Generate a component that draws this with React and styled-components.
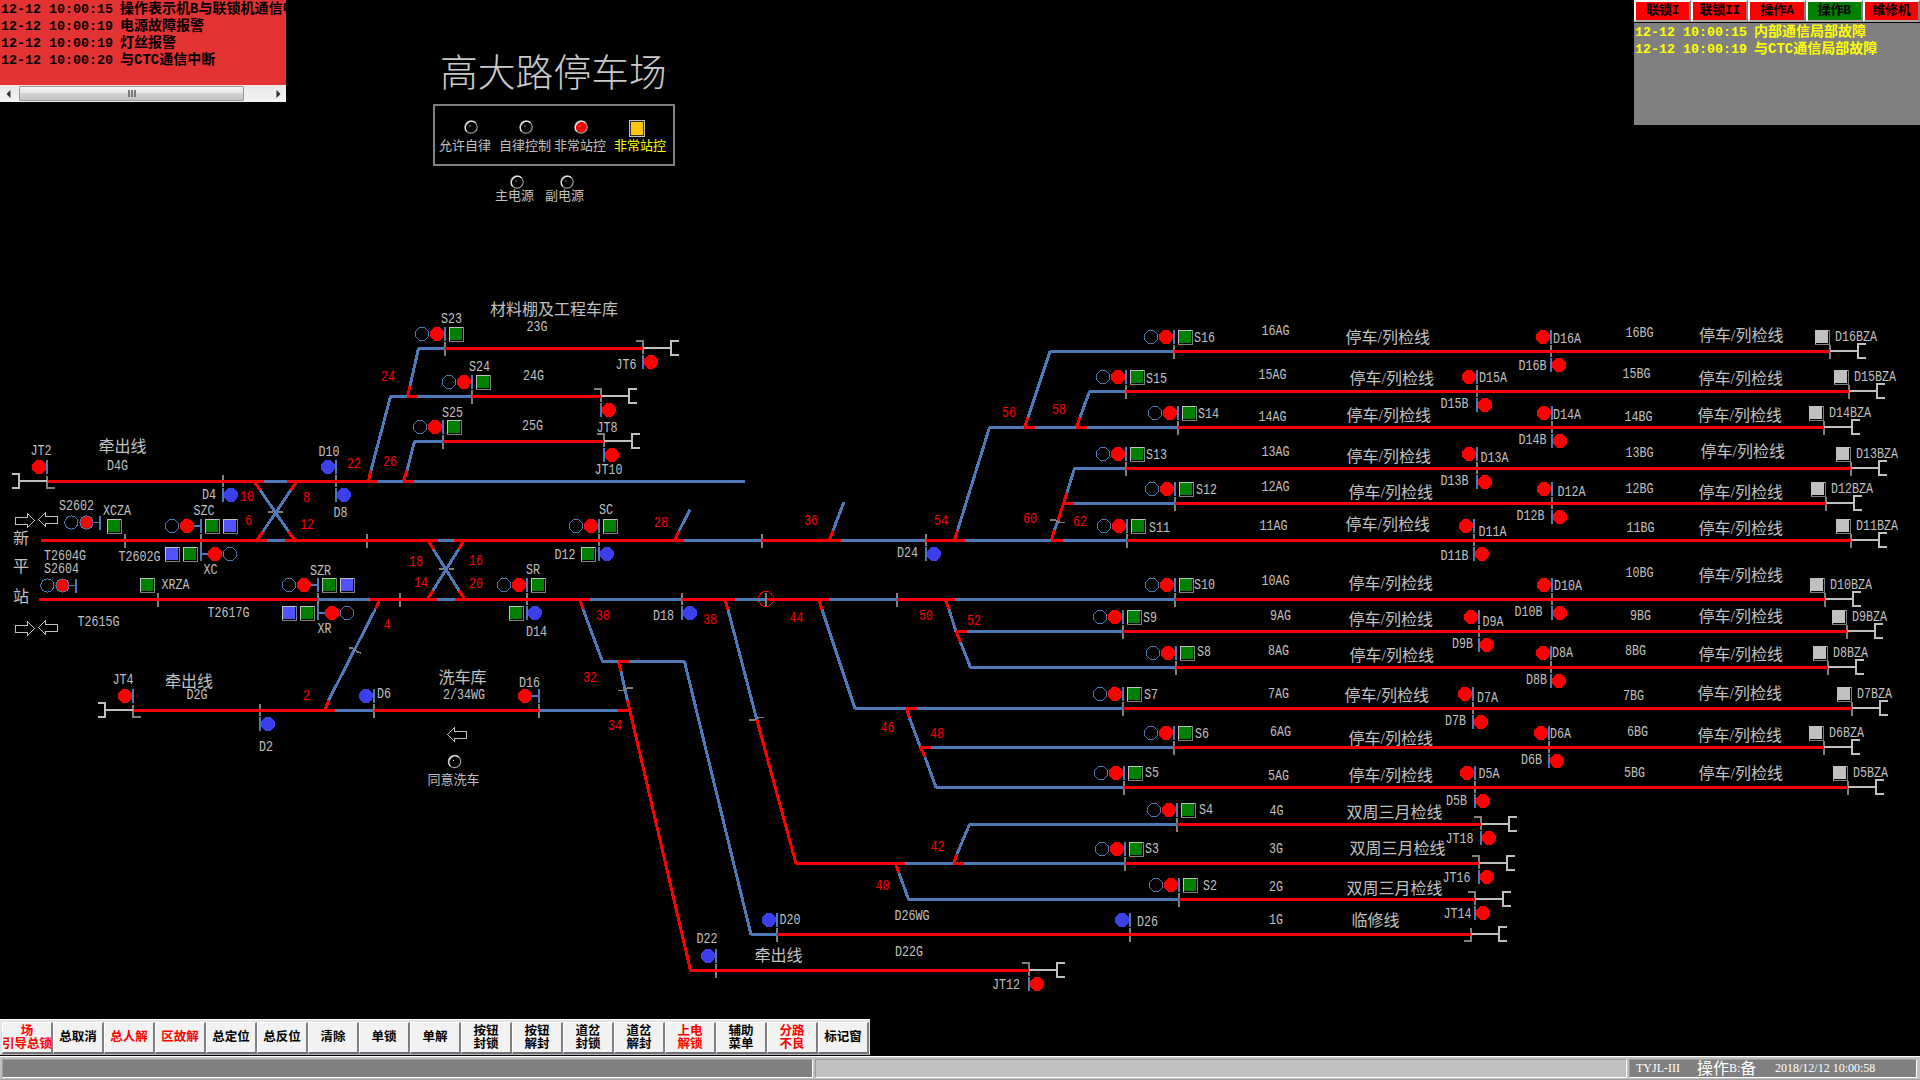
import React from "react";
import styled, { createGlobalStyle } from "styled-components";

const C = {
  red: "#ff0000",
  track: "#5078b8",
  blue: "#3c40ec",
  lilac: "#5252ff",
  green: "#008000",
  light: "#c0c0c0",
  gray: "#808080",
};

const CJK = '"Noto Sans CJK SC"';
const MONO = `"Liberation Mono", ${CJK}, monospace`;
const SERIF = `"Liberation Serif", ${CJK}, serif`;

const GlobalStyle = createGlobalStyle`
  * { box-sizing: border-box; }
  html, body { margin: 0; padding: 0; background: #000; overflow: hidden; }
`;

const Screen = styled.div`
  width: 1920px;
  height: 1080px;
  background: #000;
  display: flex;
  flex-direction: column;
  overflow: hidden;
`;

const Header = styled.header`
  display: flex;
  align-items: flex-start;
  height: 290px;
`;

/* ---------- alarm window ---------- */

const AlarmWindow = styled.section`
  width: 286px;
  height: 102px;
  display: flex;
  flex-direction: column;
`;

const MessageList = styled.div`
  flex: 1;
  overflow: hidden;
  background: ${(p) => p.$bg};
  color: ${(p) => p.$fg};
  padding: ${(p) => p.$pad};
`;

const MessageRow = styled.div`
  display: flex;
  gap: 7px;
  height: 17px;
  line-height: 17px;
  white-space: nowrap;
  font-family: ${MONO};
  font-weight: 700;
  font-size: 14px;
`;

const Stamp = styled.span`
  flex: none;
  width: 112px;
  font-size: 13.33px;
`;

const ScrollBar = styled.div`
  display: flex;
  align-items: center;
  height: 17px;
  background: linear-gradient(#e8e8e8, #f4f4f4);
`;

const ScrollButton = styled.div`
  width: 16px;
  display: flex;
  justify-content: center;
`;

const ScrollThumb = styled.div`
  width: 225px;
  height: 15px;
  margin-left: 3px;
  border: 1px solid #979797;
  border-radius: 1px;
  background: linear-gradient(#f4f4f4, #e6e6e6 45%, #d2d2d4 50%, #c4c4c8);
  display: flex;
  align-items: center;
  justify-content: center;
  gap: 1px;
`;

const Grip = styled.span`
  width: 2px;
  height: 7px;
  background: #7c7c7c;
`;

const ScrollSpace = styled.div`
  flex: 1;
`;

/* ---------- station header ---------- */

const Station = styled.section`
  margin-left: 147px;
  width: 242px;
  padding-top: 50px;
`;

const Title = styled.h1`
  margin: 0 0 14px;
  padding-left: 7px;
  height: 40px;
  font: 300 37.8px/40px ${CJK}, sans-serif;
  color: #cacaca;
  white-space: nowrap;
`;

const ModeBox = styled.div`
  width: 242px;
  height: 62px;
  border: 2px solid ${C.gray};
  padding: 14px 0 0 4px;
  display: flex;
`;

const PowerRow = styled.div`
  display: flex;
  padding: 9px 0 0 62px;
`;

const Indicator = styled.div`
  flex: none;
  width: ${(p) => p.$w}px;
  margin-left: ${(p) => p.$gap || 0}px;
  display: flex;
  flex-direction: column;
  align-items: center;
  font: 400 13px/14px ${CJK}, sans-serif;
  color: ${(p) => p.$color || C.light};
  white-space: nowrap;
`;

const LampSlot = styled.div`
  height: ${(p) => p.$h}px;
  padding-left: ${(p) => Math.max(0, p.$shift * 2)}px;
  padding-right: ${(p) => Math.max(0, -p.$shift * 2)}px;
`;

const SquareLamp = styled.div`
  width: 16px;
  height: 17px;
  border: 1px solid ${C.light};
  background: #ffc60a;
  box-shadow: inset 0 0 0 1px #303030;
`;

/* ---------- link status window ---------- */

const LinkWindow = styled.section`
  margin-left: auto;
  width: 286px;
  height: 125px;
  display: flex;
  flex-direction: column;
`;

const LinkButtons = styled.div`
  display: flex;
  height: 23px;
  background: #c0c0c0;
  border-bottom: 1px solid #000;
`;

const LinkButton = styled.button`
  flex: 1;
  padding: 0;
  border: 2px solid;
  border-color: #ffffff #808080 #a8a8a8 #ffffff;
  background: ${(p) => (p.$ok ? C.green : C.red)};
  color: #000;
  font: 700 13px/16px ${MONO};
  letter-spacing: -0.3px;
`;

/* ---------- bottom ---------- */

const Toolbar = styled.nav`
  display: flex;
  width: 870px;
  height: 36px;
  padding: 2px 1px 1px 2px;
  background: #e4e4e4;
  border-top: 1px solid #fff;
  border-bottom: 1px solid #b4b4bc;
`;

const ToolButton = styled.button`
  flex: 1;
  min-width: 0;
  height: 32px;
  padding: 0 0 4px;
  border: solid;
  border-width: 1px 2px 2px 1px;
  border-color: #ffffff #808084 #707074 #ffffff;
  background: #f2f2f2;
  color: ${(p) => (p.$red ? C.red : "#000")};
  font: 700 12.5px/13px ${CJK}, sans-serif;
  display: flex;
  flex-direction: column;
  align-items: center;
  justify-content: center;
  white-space: nowrap;
  overflow: hidden;
`;

const StatusBar = styled.footer`
  display: flex;
  gap: 2px;
  height: 24px;
  margin-top: 1px;
  padding: 2px 2px 1px;
  background: #c0c0c0;
  border-top: 1px solid #fff;
  border-bottom: 1px solid #a0a0a0;
`;

const StatusCell = styled.div`
  width: ${(p) => p.$w}px;
  height: 19px;
  border: 1px solid;
  border-color: #9a9a9a #fff #fff #9a9a9a;
  background: ${(p) => (p.$dark ? "#808080" : "#c0c0c0")};
  color: #ffffff;
  display: flex;
  align-items: center;
  padding-left: 6px;
  font: 12px/17px ${SERIF};
  white-space: nowrap;
`;

const StatusText = styled.span`
  width: ${(p) => p.$w}px;
  display: flex;
  align-items: center;
`;

const Wide = styled.span`
  font-size: 16px;
`;

/* ---------- diagram ---------- */

const Diagram = styled.svg`
  display: block;
  flex: none;
  width: 1920px;
  height: 729px;
`;

const Code = styled.text`
  font-family: ${MONO};
  font-size: 14px;
  fill: ${(p) => p.$fill};
`;

const Name = styled.text`
  font-family: ${SERIF};
  font-size: ${(p) => p.$size}px;
  fill: ${C.light};
`;

// [points, colour]; r = occupied or switch stub, b = free
const TRACKS = [];
const row = (y, ...stops) => {
  for (let i = 0; i + 2 < stops.length; i += 2) {
    TRACKS.push([[stops[i], y, stops[i + 2], y], stops[i + 1]]);
  }
};
const path = (...v) => {
  for (let i = 0; i + 3 < v.length; i += 3) {
    TRACKS.push([[v[i], v[i + 1], v[i + 3], v[i + 4]], v[i + 2]]);
  }
};

path(368.5, 481, "r", 371, 470.5, "b", 390.5, 396.5);
path(407.5, 396, "r", 410, 386, "b", 418.5, 348.5);
path(403.5, 481, "r", 407, 470.5, "b", 414.5, 441.5);
path(254.5, 482, "r", 260.5, 490.5, "b", 288.5, 531.5, "r", 294.5, 540);
path(296.5, 482, "r", 290.5, 490.5, "b", 263, 531.5, "r", 257, 540);
path(428.5, 541, "r", 433.5, 549.5, "b", 459, 590.5, "r", 464.5, 599);
path(463.5, 541, "r", 458.5, 549.5, "b", 433, 590.5, "r", 427.5, 599);
path(674.5, 540, "r", 679, 531, "b", 690, 509.5);
path(829.5, 540, "r", 833, 530.5, "b", 844, 502);
path(954.5, 540, "r", 957.5, 530.5, "b", 989.5, 427.5);
path(1024.5, 427, "r", 1028, 417.5, "b", 1050, 351.5);
path(1076.5, 427, "r", 1080, 417.5, "b", 1089.5, 391.5);
path(1051.5, 540, "r", 1054.5, 530, "b", 1057.5, 522, "r", 1067, 492.5, "b", 1074.5, 468.5);
path(945.5, 600, "r", 949, 609.5, "b", 956, 631.5, "r", 960.5, 642, "b", 970.5, 667.5);
path(819, 600, "r", 822, 609.5, "b", 855, 708.5);
path(906.5, 708.5, "r", 909.5, 718, "b", 920.5, 747.5, "r", 925, 757, "b", 936, 787.5);
path(725, 600, "r", 728, 609.5, "b", 756.5, 718.5, "r", 796, 863.5);
path(953.5, 863.5, "r", 957, 854, "b", 969.5, 824.5);
path(895.5, 863.5, "r", 899, 873, "b", 908.5, 899.5);
path(580, 600, "r", 583, 609, "b", 602.5, 661.5);
path(684.5, 661.5, "b", 751, 934.5);
path(618.5, 662, "r", 621, 671.5, "b", 627.5, 700.5, "r", 690.5, 970.5);
path(379.5, 600, "r", 375.5, 609, "b", 328.5, 700.5, "r", 325, 710);

row(481.5, 48, "r", 264, "b", 287, "r", 378, "b", 403, "r", 414, "b", 745);
row(540.5, 41, "r", 267, "b", 285, "r", 438, "b", 453.5, "r", 684, "b", 762, "r", 841, "b", 926, "r", 965, "b", 1051, "r", 1063, "b", 1127, "r", 1851);
row(599.5, 39, "r", 318, "b", 370, "r", 437, "b", 455, "r", 590, "b", 682, "r", 735, "b", 766, "r", 829, "b", 897, "r", 955, "b", 1175, "r", 1825);
row(710.5, 134, "r", 335, "b", 374, "r", 539, "b", 618, "r", 629);
row(348.5, 418, "b", 445, "r", 643);
row(396.5, 390, "b", 407, "r", 418, "b", 472, "r", 601);
row(441.5, 414, "b", 443, "r", 604);
row(351.5, 1050, "b", 1174, "r", 1830);
row(391.5, 1089, "b", 1126, "r", 1849);
row(427.5, 989, "b", 1024, "r", 1035, "b", 1076, "r", 1087, "b", 1178, "r", 1824);
row(468.5, 1074, "b", 1126, "r", 1851);
row(503.5, 1063, "r", 1074, "b", 1175, "r", 1826);
row(631.5, 956, "r", 967, "b", 1123, "r", 1847);
row(667.5, 970, "b", 1176, "r", 1828);
row(708.5, 855, "b", 906, "r", 917, "b", 1123, "r", 1852);
row(747.5, 920, "r", 931, "b", 1174, "r", 1824);
row(787.5, 936, "b", 1124, "r", 1848);
row(824.5, 969, "b", 1177, "r", 1481);
row(863.5, 796, "r", 905, "b", 953, "r", 964, "b", 1125, "r", 1479);
row(899.5, 908, "b", 1179, "r", 1475);
row(934.5, 751, "b", 777, "r", 1471);
row(970.5, 690, "r", 1029);
row(661.5, 602, "b", 618, "r", 629, "b", 685);

// exit signals: post x, track y
const HOME = [
  [445, 348.5], [472, 396.5], [443, 441.5], [599, 540.5], [527, 599.5],
  [1174, 351.5], [1126, 391.5], [1178, 427.5], [1126, 468.5], [1175, 503.5], [1127, 540.5],
  [1175, 599.5], [1123, 631.5], [1176, 667.5], [1123, 708.5], [1174, 747.5], [1124, 787.5],
  [1177, 824.5], [1125, 863.5], [1179, 899.5],
];

// paired shunting signals inside the stabling tracks
const PAIRS = [
  [1551, 351.5], [1477, 391.5], [1552, 427.5], [1477, 468.5], [1552, 503.5], [1474, 540.5],
  [1552, 599.5], [1479, 631.5], [1551, 667.5], [1473, 708.5], [1549, 747.5], [1475, 787.5],
];

const UP = [[336, 481.5, C.blue], [374, 710.5, C.blue], [777, 934.5, C.blue], [716, 970.5, C.blue], [1130, 934.5, C.blue]];
const DOWN = [
  [223, 481.5, C.blue], [336, 481.5, C.blue], [260, 710.5, C.blue], [599, 540.5, C.blue],
  [527, 599.5, C.blue], [682, 599.5, C.blue], [926, 540.5, C.blue],
];

const JOINTS = [[125, 540.5], [201, 540.5], [367, 540.5], [158, 599.5], [318, 599.5], [400, 599.5], [762, 540.5], [766, 599.5], [897, 599.5], [539, 710.5]];

const JT = [[643, 348.5], [601, 396.5], [604, 441.5], [1481, 824.5], [1479, 863.5], [1475, 899.5], [1029, 970.5]];

// stabling track ends: post x, track y, number
const ENDS = [
  [1830, 351.5, 16], [1849, 391.5, 15], [1824, 427.5, 14], [1851, 468.5, 13], [1826, 503.5, 12], [1851, 540.5, 11],
  [1825, 599.5, 10], [1847, 631.5, 9], [1828, 667.5, 8], [1852, 708.5, 7], [1824, 747.5, 6], [1848, 787.5, 5],
];

const CODES = [
  [31, 455, "JT2"], [107.5, 470, "D4G"], [319, 456, "D10"], [202.5, 498.5, "D4"], [334, 517, "D8"], [59.5, 510, "S2602"],
  [103.5, 515, "XCZA"], [194, 515, "SZC"], [44.5, 559.5, "T2604G"], [44.5, 573, "S2604"], [119, 561, "T2602G"],
  [204, 574, "XC"], [162, 589, "XRZA"], [310.5, 574.5, "SZR"], [208, 617, "T2617G"], [78, 626, "T2615G"], [318, 633, "XR"],
  [113, 684, "JT4"], [187, 699, "D2G"], [377.5, 698, "D6"], [259.5, 751, "D2"],
  [527, 330.5, "23G"], [441.5, 322.5, "S23"], [469.5, 370.5, "S24"], [523.5, 379.5, "24G"], [442.5, 416.5, "S25"],
  [522.5, 429.5, "25G"], [616, 368.5, "JT6"], [597, 431.5, "JT8"], [595, 473.5, "JT10"], [599.5, 513.5, "SC"],
  [555, 558.5, "D12"], [526.5, 573.5, "SR"], [526.5, 635.5, "D14"], [653.5, 619.5, "D18"], [443.5, 698.5, "2/34WG"],
  [519.5, 686.5, "D16"], [897.5, 556.5, "D24"], [780, 923.5, "D20"], [895, 919.5, "D26WG"], [697, 942.5, "D22"],
  [895.5, 955.5, "D22G"], [992.5, 988.5, "JT12"], [1446, 842.5, "JT18"], [1443, 881.5, "JT16"], [1444, 917.5, "JT14"],
  [1194.5, 342, "S16"], [1146.5, 382.5, "S15"], [1198.5, 417.5, "S14"], [1146.5, 458.5, "S13"], [1196.5, 493.5, "S12"],
  [1149.5, 531.5, "S11"], [1194.5, 589, "S10"], [1143.5, 622, "S9"], [1197.5, 655.5, "S8"], [1144.5, 698.5, "S7"],
  [1195.5, 737.5, "S6"], [1145.5, 776.5, "S5"], [1199.5, 813.5, "S4"], [1145.5, 852.5, "S3"], [1203.5, 889.5, "S2"],
  [1137.5, 925.5, "D26"],
  [1262, 334.5, "16AG"], [1259, 378.5, "15AG"], [1259, 420.5, "14AG"], [1262, 455.5, "13AG"], [1262, 490.5, "12AG"],
  [1260, 529.5, "11AG"], [1262, 584.5, "10AG"], [1270.5, 619.5, "9AG"], [1268.5, 654.5, "8AG"], [1268.5, 697.5, "7AG"],
  [1270.5, 735.5, "6AG"], [1268.5, 779.5, "5AG"], [1270, 814.5, "4G"], [1269.5, 852.5, "3G"], [1269.5, 890.5, "2G"],
  [1269.5, 923.5, "1G"],
  [1553.5, 342.5, "D16A"], [1479.5, 381.5, "D15A"], [1553.5, 418.5, "D14A"], [1481, 461.5, "D13A"], [1558, 495.5, "D12A"],
  [1479, 535.5, "D11A"], [1554.5, 589.5, "D10A"], [1483, 625.5, "D9A"], [1552.5, 656.5, "D8A"], [1477.5, 701.5, "D7A"],
  [1550.5, 737.5, "D6A"], [1479, 777.5, "D5A"],
  [1519, 370, "D16B"], [1441, 407.5, "D15B"], [1519, 443.5, "D14B"], [1441, 484.5, "D13B"], [1517, 519.5, "D12B"],
  [1441, 559.5, "D11B"], [1515, 615.5, "D10B"], [1452.5, 647.5, "D9B"], [1526.5, 683.5, "D8B"], [1445.5, 724.5, "D7B"],
  [1521.5, 763.5, "D6B"], [1446.5, 804.5, "D5B"],
  [1626, 336.5, "16BG"], [1623, 378, "15BG"], [1625, 420.5, "14BG"], [1626, 456.5, "13BG"], [1626, 492.5, "12BG"],
  [1627, 531.5, "11BG"], [1626, 576.5, "10BG"], [1630.5, 619.5, "9BG"], [1625.5, 654.5, "8BG"], [1623.5, 699.5, "7BG"],
  [1627.5, 735.5, "6BG"], [1624.5, 776.5, "5BG"],
];

const POINTS = [
  [347.5, 468, "22"], [383.5, 466, "26"], [240.5, 501, "10"], [303.5, 502, "8"], [245.5, 525, "6"], [300.5, 529, "12"],
  [384, 629, "4"], [303.5, 700, "2"], [381.5, 381, "24"], [654.5, 526.5, "28"], [409.5, 565.5, "18"], [469.5, 564.5, "16"],
  [414.5, 586.5, "14"], [469.5, 587.5, "20"], [596.5, 619.5, "30"], [703.5, 624, "38"], [583.5, 681.5, "32"],
  [608.5, 729.5, "34"], [804.5, 524.5, "36"], [934.5, 524.5, "54"], [1023.5, 522.5, "60"], [1073.5, 525.5, "62"],
  [790, 621.5, "44"], [919.5, 619.5, "50"], [967.5, 624.5, "52"], [881, 731.5, "46"], [930.5, 737.5, "48"],
  [931, 850.5, "42"], [1002.5, 417, "56"], [1052.5, 413.5, "58"], [876, 889.5, "40"],
];

// left edge, bottom edge, text
const STABLING = "停车/列检线";
const TRIPLE = "双周三月检线";
const NAMES = [
  [99, 453.5, "牵出线"], [13.5, 545.5, "新"], [13.5, 573.5, "平"], [13.5, 603.5, "站"], [165.5, 688, "牵出线"],
  [490.5, 316.5, "材料棚及工程车库"], [439, 684.5, "洗车库"], [755, 962.5, "牵出线"],
  [1346, 344.5, STABLING], [1350, 385.5, STABLING], [1347, 422.5, STABLING], [1347, 463.5, STABLING],
  [1349, 499.5, STABLING], [1346, 531.5, STABLING], [1349, 590.5, STABLING], [1349, 626.5, STABLING],
  [1350, 662.5, STABLING], [1345, 702.5, STABLING], [1349, 745.5, STABLING], [1349, 782.5, STABLING],
  [1347, 819.5, TRIPLE], [1350, 855.5, TRIPLE], [1347, 895.5, TRIPLE], [1352, 927.5, "临修线"],
  [1699.5, 342.5, STABLING], [1699, 385.5, STABLING], [1698, 422.5, STABLING], [1701, 458.5, STABLING],
  [1699, 499.5, STABLING], [1699, 535.5, STABLING], [1699, 582.5, STABLING], [1699, 623.5, STABLING],
  [1699, 661.5, STABLING], [1698, 700.5, STABLING], [1698, 742.5, STABLING], [1699, 780.5, STABLING],
];

const Post = ({ x, y, down }) => (
  <rect x={x - 1} y={down ? y + 6.5 : y - 21.5} width="2" height="14" fill={C.track} />
);
const Joint = ({ x, y, short }) => <rect x={x - 1} y={y - 6.5} width="2" height={short ? 12 : 14} fill={C.gray} />;
const Disc = ({ x, y, fill }) => <circle cx={x} cy={y} r="7" fill={fill} />;
const Ring = ({ x, y }) => <circle cx={x} cy={y} r="6.6" fill="none" stroke={C.track} strokeWidth="1" />;
const Key = ({ x, y, fill = C.green }) => (
  <g>
    <rect x={x} y={y} width="15" height="15" fill={C.gray} />
    <rect x={x} y={y} width="14" height="14" fill={C.light} />
    <rect x={x + 1} y={y + 1} width="13" height="13" fill="#000" />
    <rect x={x + 1} y={y + 1} width="12" height="12" fill={fill} />
  </g>
);

const BufferStop = ({ x, y, dir = 1, arm = 8 }) => (
  <g fill="none" stroke={C.light} strokeWidth="2">
    <path d={`M${x} ${y - 0.5}H${x + 28 * dir}`} />
    <path d={`M${x + (28 + arm) * dir} ${y - 7.5}H${x + 28 * dir}V${y + 6.5}H${x + (28 + arm) * dir}`} />
  </g>
);

const Arrow = ({ x, y, dir }) => (
  <path
    transform={`translate(${x} ${y}) scale(${dir} 1)`}
    d="M-9.5 -3.5H2.5V-7L9.5 0L2.5 7V3.5H-9.5Z"
    fill="none"
    stroke={C.light}
    strokeWidth="1"
  />
);

const LampDrawing = ({ cx, cy, on, r = 6.2 }) => (
  <g>
    <circle cx={cx} cy={cy} r={r} fill={on ? C.red : "none"} stroke="#9a9a9a" strokeWidth="1.2" />
    <path
      d={`M${cx - r * 0.7} ${cy + r * 0.7}A${r} ${r} 0 0 1 ${cx + r * 0.7} ${cy - r * 0.7}`}
      fill="none"
      stroke="#f0f0f0"
      strokeWidth="1.2"
    />
    <rect x={cx - 1.5} y={cy - 1.5} width="1" height="1" fill="#fff" />
  </g>
);

const LampSvg = styled.svg`
  display: block;
`;

const Lamp = ({ on }) => (
  <LampSvg width="14" height="14">
    <LampDrawing cx={7} cy={7} on={on} />
  </LampSvg>
);

const Entry = ({ x, y }) => (
  <g>
    <Ring x={x - 28.7} y={y} />
    <rect x={x - 7} y={y - 0.5} width="7" height="1" fill={C.track} />
    <Disc x={x - 13.5} y={y} fill={C.red} />
    <Ring x={x - 13.5} y={y} />
    <rect x={x - 1} y={y - 7} width="2" height="14" fill={C.track} />
  </g>
);

const Throat = ({ x, y }) => (
  <g>
    <Joint x={x} y={y} short />
    <Post x={x} y={y} />
    <Post x={x} y={y} down />
    <rect x={x - 8} y={y - 15.5} width="8" height="2" fill={C.track} />
    <rect x={x} y={y + 12.5} width="8" height="2" fill={C.track} />
    <Disc x={x - 14} y={y - 14.5} fill={C.red} />
    <Ring x={x - 29} y={y - 14.5} />
    <Key x={x + 4} y={y - 21.5} />
    <Key x={x + 22} y={y - 21.5} fill={C.lilac} />
    <Disc x={x + 14} y={y + 13.5} fill={C.red} />
    <Ring x={x + 29} y={y + 13.5} />
    <Key x={x - 18} y={y + 6.5} />
    <Key x={x - 36} y={y + 6.5} fill={C.lilac} />
  </g>
);

function TrackPlan() {
  return (
    <Diagram viewBox="0 290 1920 729" shapeRendering="crispEdges">
      {JOINTS.map(([x, y]) => <Joint key={`${x}-${y}`} x={x} y={y} />)}
      {HOME.map(([x, y]) => (
        <g key={`h${x}-${y}`}>
          <Joint x={x} y={y} short={x === 599 || x === 527} />
          <Post x={x} y={y} />
          <Disc x={x - 8} y={y - 14.5} fill={C.red} />
          <Ring x={x - 23} y={y - 14.5} />
          <Key x={x + 4} y={y - 21.5} />
        </g>
      ))}
      {UP.map(([x, y, fill]) => (
        <g key={`u${x}-${y}`}>
          <Joint x={x} y={y} short={x === 336} />
          <Post x={x} y={y} />
          <Disc x={x - 8} y={y - 14.5} fill={fill} />
        </g>
      ))}
      {DOWN.map(([x, y, fill]) => (
        <g key={`d${x}-${y}`}>
          <Joint x={x} y={y} short />
          <Post x={x} y={y} down />
          <Disc x={x + 8} y={y + 13.5} fill={fill} />
        </g>
      ))}
      {PAIRS.map(([x, y]) => (
        <g key={`p${x}-${y}`}>
          <Joint x={x} y={y} short />
          <Post x={x} y={y} />
          <Post x={x} y={y} down />
          <Disc x={x - 8} y={y - 14.5} fill={C.red} />
          <Disc x={x + 8} y={y + 13.5} fill={C.red} />
        </g>
      ))}
      {JT.map(([x, y]) => (
        <g key={`j${x}-${y}`}>
          <path d={`M${x - 7} ${y - 7.5}H${x}V${y + 5.5}`} fill="none" stroke={C.gray} strokeWidth="2" />
          <Post x={x} y={y} down />
          <Disc x={x + 8} y={y + 13.5} fill={C.red} />
          <BufferStop x={x} y={y} />
        </g>
      ))}
      <path d="M1464 941H1471V927.5" fill="none" stroke={C.gray} strokeWidth="2" />
      <BufferStop x={1471} y={934.5} />
      {[[47, 481.5], [133, 710.5]].map(([x, y]) => (
        <g key={`l${x}`}>
          <path d={`M${x} ${y - 6}V${y + 6.5}H${x + 8}`} fill="none" stroke={C.gray} strokeWidth="2" />
          <Post x={x} y={y} />
          <Disc x={x - 8} y={y - 14.5} fill={C.red} />
          <BufferStop x={x} y={y} dir={-1} arm={7} />
        </g>
      ))}
      {ENDS.map(([x, y]) => (
        <g key={`e${x}-${y}`}>
          <Joint x={x} y={y} />
          <Key x={x - 15} y={y - 21.5} fill={C.light} />
          <BufferStop x={x} y={y} />
        </g>
      ))}
      <Throat x={201} y={540.5} />
      <Throat x={318} y={599.5} />
      <Entry x={100} y={522.5} />
      <Entry x={76} y={585.5} />
      <Key x={107} y={519} />
      <Key x={140} y={578} />
      <Key x={581} y={547} />
      <Key x={509} y={606} />
      <Post x={539} y={710.5} />
      <rect x="531" y="695" width="8" height="2" fill={C.track} />
      <Disc x={525} y={696} fill={C.red} />
      <circle cx="766" cy="599" r="7.5" fill="none" stroke={C.red} strokeWidth="1" />

      {TRACKS.map(([[x1, y1, x2, y2], c], i) => (
        <line key={i} x1={x1} y1={y1} x2={x2} y2={y2} stroke={c === "r" ? C.red : C.track} strokeWidth="3" />
      ))}

      <g fill="none" stroke={C.gray} strokeWidth="1.6">
        <path d="M268 512H273M278 512H283" />
        <path d="M439 569H444M449 569H454" />
        <path d="M348.5 648H352L357 651.5L361 653" />
        <path d="M618 690.5H623L628 688H633" />
        <path d="M749 720H754L759 717.5H764" />
        <path d="M1050 520H1055L1060 522.5H1065" />
      </g>
      <rect x="765" y="593" width="2" height="13" fill={C.gray} />

      <Arrow x={25} y={520.5} dir={1} />
      <Arrow x={48} y={519.5} dir={-1} />
      <Arrow x={25} y={628.5} dir={1} />
      <Arrow x={48} y={627.5} dir={-1} />
      <Arrow x={457} y={734.5} dir={-1} />
      <g shapeRendering="auto">
        <LampDrawing cx={454.5} cy={761.5} />
      </g>

      {CODES.map(([x, y, s]) => (
        <Code key={s} x={x - 0.5} y={y} textLength={s.length * 7} lengthAdjust="spacingAndGlyphs" $fill={C.light}>{s}</Code>
      ))}
      {ENDS.map(([x, y, n]) => (
        <Code key={`z${n}`} x={x + 5} y={y - 11} textLength={`D${n}BZA`.length * 7} lengthAdjust="spacingAndGlyphs" $fill={C.light}>
          {`D${n}BZA`}
        </Code>
      ))}
      {POINTS.map(([x, y, s]) => (
        <Code key={s} x={x - 0.5} y={y} textLength={s.length * 7} lengthAdjust="spacingAndGlyphs" $fill={C.red}>{s}</Code>
      ))}
      {NAMES.map(([x, y, s]) => (
        <Name key={`${x}-${y}`} x={x - 0.5} y={y - 1.5} $size={16}>{s}</Name>
      ))}
      <Name x={427.5} y={783.5} $size={13}>同意洗车</Name>
    </Diagram>
  );
}

const ALARMS = [
  ["12-12 10:00:15", "操作表示机B与联锁机通信中断"],
  ["12-12 10:00:19", "电源故障报警"],
  ["12-12 10:00:19", "灯丝报警"],
  ["12-12 10:00:20", "与CTC通信中断"],
];

const FAULTS = [
  ["12-12 10:00:15", "内部通信局部故障"],
  ["12-12 10:00:19", "与CTC通信局部故障"],
];

const LINKS = [["联锁I"], ["联锁II"], ["操作A"], ["操作B", true], ["维修机"]];

const TOOLS = [
  [["场", "引导总锁"], true], [["总取消"]], [["总人解"], true], [["区故解"], true], [["总定位"]], [["总反位"]],
  [["清除"]], [["单锁"]], [["单解"]], [["按钮", "封锁"]], [["按钮", "解封"]], [["道岔", "封锁"]], [["道岔", "解封"]],
  [["上电", "解锁"], true], [["辅助", "菜单"]], [["分路", "不良"], true], [["标记窗"]],
];

export default function App() {
  return (
    <Screen>
      <GlobalStyle />
      <Header>
        <AlarmWindow>
          <MessageList $bg="#e23232" $fg="#000" $pad="1px 0 0 1px">
            {ALARMS.map(([t, m]) => (
              <MessageRow key={t + m}><Stamp>{t}</Stamp><span>{m}</span></MessageRow>
            ))}
          </MessageList>
          <ScrollBar>
            <ScrollButton>
              <svg width="5" height="8"><path d="M4.5 0V8L0.5 4Z" fill="#303030" /></svg>
            </ScrollButton>
            <ScrollThumb><Grip /><Grip /><Grip /></ScrollThumb>
            <ScrollSpace />
            <ScrollButton>
              <svg width="5" height="8"><path d="M0.5 0V8L4.5 4Z" fill="#303030" /></svg>
            </ScrollButton>
          </ScrollBar>
        </AlarmWindow>

        <Station>
          <Title>高大路停车场</Title>
          <ModeBox>
            <Indicator $w={52}><LampSlot $h={18} $shift={5.5}><Lamp /></LampSlot>允许自律</Indicator>
            <Indicator $w={52} $gap={8}><LampSlot $h={18} $shift={0.5}><Lamp /></LampSlot>自律控制</Indicator>
            <Indicator $w={52} $gap={3}><LampSlot $h={18} $shift={0.5}><Lamp on /></LampSlot>非常站控</Indicator>
            <Indicator $w={52} $gap={8} $color="#ffff00">
              <LampSlot $h={18} $shift={-3}><SquareLamp /></LampSlot>非常站控
            </Indicator>
          </ModeBox>
          <PowerRow>
            <Indicator $w={39}><LampSlot $h={13} $shift={2.5}><Lamp /></LampSlot>主电源</Indicator>
            <Indicator $w={39} $gap={11}><LampSlot $h={13} $shift={2.5}><Lamp /></LampSlot>副电源</Indicator>
          </PowerRow>
        </Station>

        <LinkWindow>
          <LinkButtons>
            {LINKS.map(([s, ok]) => <LinkButton key={s} $ok={ok}>{s}</LinkButton>)}
          </LinkButtons>
          <MessageList $bg="#808080" $fg="#ffff00" $pad="1px 0 0 1px">
            {FAULTS.map(([t, m]) => (
              <MessageRow key={t}><Stamp>{t}</Stamp><span>{m}</span></MessageRow>
            ))}
          </MessageList>
        </LinkWindow>
      </Header>

      <TrackPlan />

      <Toolbar>
        {TOOLS.map(([lines, red]) => (
          <ToolButton key={lines.join("")} $red={red}>
            {lines.map((l) => <span key={l}>{l}</span>)}
          </ToolButton>
        ))}
      </Toolbar>

      <StatusBar>
        <StatusCell $w={811} $dark />
        <StatusCell $w={812} />
        <StatusCell $w={288} $dark>
          <StatusText $w={61}>TYJL-III</StatusText>
          <StatusText $w={78}><Wide>操作</Wide>B:<Wide>备</Wide></StatusText>
          <StatusText $w={110}>2018/12/12 10:00:58</StatusText>
        </StatusCell>
      </StatusBar>
    </Screen>
  );
}
